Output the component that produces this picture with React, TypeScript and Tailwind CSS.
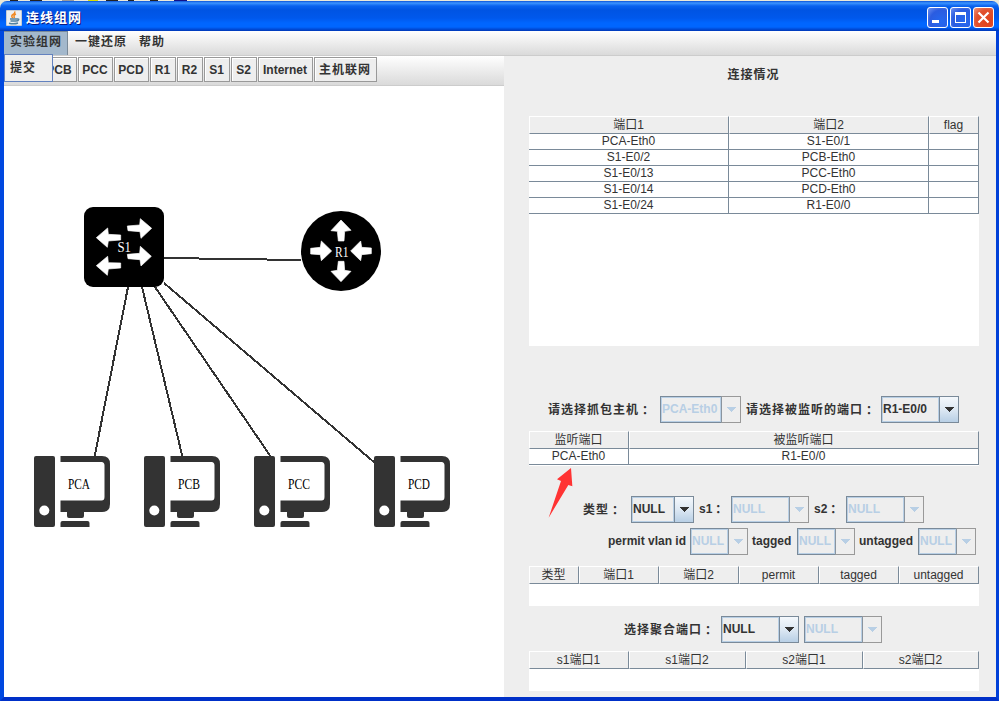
import React from "react";

const cx = (...c: (string | false | undefined)[]) => c.filter(Boolean).join(" ");

type ComboProps = { value: string; width: string; disabled?: boolean; className?: string };

function Combo({ value, width, disabled, className }: ComboProps) {
  return (
    <div className={cx("flex h-[27px] shrink-0", width, className)}>
      <div className="flex min-w-0 flex-1 border border-r-0 border-[#7a8a99]">
        <div
          className={cx(
            "flex flex-1 items-center overflow-hidden whitespace-nowrap border border-[#b8cfe5] pb-[2px] font-bold",
            disabled ? "text-[#b8cfe5]" : "text-[#333]"
          )}
        >
          {value}
        </div>
      </div>
      <div
        className={cx(
          "flex w-5 items-center justify-center border",
          disabled
            ? "border-[#999] border-l-[#8a949e]"
            : "border-[#7a8a99] bg-linear-to-b from-[#f4f8fc] via-[#dde8f3] to-[#b8cfe5]"
        )}
      >
        <svg width="10" height="5" viewBox="0 0 10 5" shapeRendering="crispEdges">
          <path d="M0 0H10L5 5Z" fill={disabled ? "#b8cfe5" : "#333"} />
        </svg>
      </div>
    </div>
  );
}

type TableProps = { cols: string[]; widths: string[]; rows?: string[][]; className: string };

function Table({ cols, widths, rows = [], className }: TableProps) {
  return (
    <div className={cx("ml-[25px] w-[450px] shrink-0 bg-white text-[#333]", className)}>
      <div className="flex h-[18px]">
        {cols.map((c, i) => (
          <div
            key={c}
            className={cx(
              "flex items-center justify-center border border-t-white border-r-[#7a8a99] border-b-[#7a8a99] border-l-white bg-[#eee] pr-px leading-4",
              widths[i]
            )}
          >
            {c}
          </div>
        ))}
      </div>
      {rows.map((r, k) => (
        <div key={k} className="flex h-4">
          {r.map((c, i) => (
            <div
              key={i}
              className={cx("border-r border-b border-[#7a8a99] text-center leading-[14px]", widths[i])}
            >
              {c}
            </div>
          ))}
        </div>
      ))}
    </div>
  );
}

type LabelProps = { text: string; width: string; colon?: boolean; cjk?: boolean };

function Label({ text, width, colon, cjk }: LabelProps) {
  return (
    <span
      className={cx(
        "flex h-4 shrink-0 items-center whitespace-nowrap font-bold",
        cjk ? "tracking-[1px]" : "-mt-[2px]",
        width
      )}
    >
      {text}
      {colon && <span className="font-['Noto_Sans_CJK_TC',sans-serif]">：</span>}
    </span>
  );
}

function Computer({ x, name }: { x: number; name: string }) {
  return (
    <g transform={`translate(${x} 456)`} fill="#333">
      <rect width="21" height="71" rx="2" />
      <circle cx="10.3" cy="54.5" r="5" fill="#fff" />
      <path
        fillRule="evenodd"
        d="M26.5 0H68Q76 0 76 8V48Q76 56 68 56H50V60Q50 62 48 62H35Q33 62 33 60V56H26.5ZM26.5 6V44.5H67.5Q70.5 44.5 70.5 41V9.5Q70.5 6 67.5 6Z"
      />
      <path d="M26.5 71V67Q26.5 65 28.500 65H53.500Q55.500 65 55.500 67V71Z" />
      <text
        x="34"
        y="32.500"
        fontSize="14"
        textLength="22"
        lengthAdjust="spacingAndGlyphs"
        className="fill-black font-['Liberation_Serif',serif]"
      >
        {name}
      </text>
    </g>
  );
}

function Topology() {
  return (
    <svg width="500" height="611" viewBox="4 86 500 611">
      <g stroke="#333" strokeWidth="2" shapeRendering="crispEdges">
        <path d="M164 258L301 260" />
        <path d="M128 287L94.500 457" />
        <path d="M142 287L182.500 457" />
        <path d="M155 287L271 457" />
        <path d="M164 283L375 463" />
      </g>
      <rect x="84" y="207" width="80" height="80" rx="9" />
      <circle cx="341" cy="251" r="40" />
      <g
        transform="translate(70 195) scale(.33333)"
        fill="#fff"
        stroke="#fff"
        strokeWidth="2"
        strokeLinejoin="round"
      >
        <path d="M172 93L209 90L211 71L245 100L213 130L210 110L174 107Z" />
        <path d="M172 178L209 175L211 154L244 184L213 213L210 194L174 191Z" />
        <path d="M79 128L113 99L115 118L152 120V135L115 138L112 157Z" />
        <path d="M79 212L113 184L115 203L152 204V219L115 222L112 241Z" />
        <path d="M813 75L843 106L824 109L822 138H805L802 109L783 107Z" />
        <path d="M813 260L783 229L802 226L805 199H822L824 226L843 229Z" />
        <path d="M785 168L754 197L751 179L722 177V160L751 157L754 138Z" />
        <path d="M842 168L872 138L875 157L904 159V176L875 179L872 197Z" />
      </g>
      <g fontSize="14" fill="#fff" className="font-['Liberation_Serif',serif]">
        <text x="117.500" y="252" textLength="13.500" lengthAdjust="spacingAndGlyphs">S1</text>
        <text x="335" y="257" textLength="13.500" lengthAdjust="spacingAndGlyphs">R1</text>
      </g>
      <Computer x={34} name="PCA" />
      <Computer x={144} name="PCB" />
      <Computer x={254} name="PCC" />
      <Computer x={374} name="PCD" />
    </svg>
  );
}

function TitleBar() {
  const btn = "flex size-[21px] items-center justify-center rounded-[3px] border border-white";
  return (
    <div className="flex h-[30px] shrink-0 items-center rounded-t-[7px] bg-[linear-gradient(#0b52d8_0,#3d95ff_2px,#0a62ee_5px,#0054e3_9px,#0058ec_17px,#0066ff_22px,#0066ff_26px,#004ddb_28px,#0038b8_30px)] pt-[3px] pr-[5px] pl-[6px]">
      <svg width="16" height="16" viewBox="0 0 16 16">
        <rect width="16" height="16" rx="1" fill="#c7cdd3" />
        <rect x="1" y="1" width="14" height="14" fill="#edf0f2" />
        <g fill="none" strokeWidth="1.500">
          <path d="M8.500 1.500Q9.500 3 7 4.500T7 8M10 4Q7 5 8.500 8" stroke="#f08a24" />
          <path d="M4 9H11M4.500 11H10.500M3 13.200Q8 14.500 12 13M11 9Q14 8.500 12 10.500L10.500 11" stroke="#5382a1" />
        </g>
      </svg>
      <span className="ml-1 flex-1 text-[13px] font-bold tracking-[1px] text-white [text-shadow:1px_1px_#0a1883]">
        连线组网
      </span>
      <div className="flex gap-[2px]">
        <div className={cx(btn, "bg-[radial-gradient(circle_at_70%_70%,#2468f0,#2b5ce0_60%,#7192f0)]")}>
          <svg width="19" height="19"><rect x="4" y="12" width="7" height="3" fill="#fff" /></svg>
        </div>
        <div className={cx(btn, "bg-[radial-gradient(circle_at_70%_70%,#2468f0,#2b5ce0_60%,#7192f0)]")}>
          <svg width="19" height="19"><path d="M4 4H15V15H4ZM5 7V14H14V7Z" fill="#fff" fillRule="evenodd" /></svg>
        </div>
        <div className={cx(btn, "bg-[radial-gradient(circle_at_70%_70%,#e0411a,#e0512f_60%,#f0967c)]")}>
          <svg width="19" height="19"><path d="M4.500 4.500L14.500 14.500M14.500 4.500L4.500 14.500" stroke="#fff" strokeWidth="2.200" /></svg>
        </div>
      </div>
    </div>
  );
}

const TOOLS: [string, string][] = [
  ["PCA", "w-[35px]"],
  ["PCB", "w-[35px]"],
  ["PCC", "w-[35px]"],
  ["PCD", "w-[35px]"],
  ["R1", "w-[26px]"],
  ["R2", "w-[26px]"],
  ["S1", "w-[26px]"],
  ["S2", "w-[26px]"],
  ["Internet", "w-[55px]"],
  ["主机联网", "w-[63px] tracking-[1px]"],
];

export default function App() {
  return (
    <div className="relative flex h-[701px] w-[999px] flex-col overflow-hidden bg-[#ece9d8] font-['Liberation_Sans','Noto_Sans_CJK_SC',sans-serif] text-[12px] leading-4 text-[#333]">
      <div className="h-px shrink-0 bg-[linear-gradient(90deg,#ece9d8_10px,#222_10px_18px,#ece9d8_18px_30px,#222_30px_42px,#ece9d8_42px_62px,#999_62px_74px,#ece9d8_74px_88px,#dd0_88px_98px,#ece9d8_98px_106px,#222_106px_118px,#ece9d8_118px_128px,#222_128px_134px,#ece9d8_134px_150px,#222_150px_158px,#ece9d8_158px_174px,#118_174px_187px,#ece9d8_187px)]" />
      <TitleBar />
      <div className="flex min-h-0 flex-1 flex-col border-r-[3px] border-b-4 border-l-4 border-r-[#0040d8] border-b-[#0030c8] border-l-[#0048e0]">
        <nav className="flex h-[25px] shrink-0 border-b border-[#ccc] bg-linear-to-b from-white to-[#dadada] font-bold tracking-[1px]">
          <div className="w-16 border-t border-r border-[#7a8a99] bg-[#a3b8cc] pt-[2px] pl-[6px]">实验组网</div>
          <div className="pt-[3px] pl-[7px]">一键还原</div>
          <div className="pt-[3px] pl-[12px]">帮助</div>
        </nav>
        <div className="flex min-h-0 flex-1">
          <div className="flex w-[500px] shrink-0 flex-col bg-white">
            <div className="flex h-[30px] shrink-0 gap-px border-b border-[#ccc] bg-linear-to-b from-white to-[#dadada] pt-px pl-[2px]">
              {TOOLS.map(([t, w]) => (
                <div
                  key={t}
                  className={cx(
                    "flex h-[25px] shrink-0 items-center justify-center border border-[#999] bg-[#eee] pr-px font-bold whitespace-nowrap shadow-[inset_1px_1px_#fff]",
                    w
                  )}
                >
                  {t}
                </div>
              ))}
            </div>
            <Topology />
          </div>
          <main className="flex min-w-0 flex-1 flex-col bg-[#eee]">
            <h1 className="mt-[11px] mb-[33px] h-4 shrink-0 pl-[7px] text-center font-bold tracking-[1px]">
              连接情况
            </h1>
            <Table
              className="h-[230px]"
              cols={["端口1", "端口2", "flag"]}
              widths={["w-[200px]", "w-[200px]", "w-[50px]"]}
              rows={[
                ["PCA-Eth0", "S1-E0/1", ""],
                ["S1-E0/2", "PCB-Eth0", ""],
                ["S1-E0/13", "PCC-Eth0", ""],
                ["S1-E0/14", "PCD-Eth0", ""],
                ["S1-E0/24", "R1-E0/0", ""],
              ]}
            />
            <div className="mt-[50px] flex items-center pl-11">
              <Label width="w-28" text="请选择抓包主机" colon cjk />
              <Combo value="PCA-Eth0" width="w-[81px]" disabled />
              <span className="w-[5px]" />
              <Label width="w-[135px]" text="请选择被监听的端口" colon cjk />
              <Combo value="R1-E0/0" width="w-[78px]" />
            </div>
            <Table
              className="mt-2 h-[35px]"
              cols={["监听端口", "被监听端口"]}
              widths={["w-[100px]", "w-[350px]"]}
              rows={[["PCA-Eth0", "R1-E0/0"]]}
            />
            <div className="mt-[30px] flex items-center pl-[79px]">
              <Label width="w-12" text="类型" colon cjk />
              <Combo value="NULL" width="w-[63px]" />
              <span className="w-[5px]" />
              <Label width="w-8" text="s1" colon />
              <Combo value="NULL" width="w-[78px]" disabled />
              <span className="w-[5px]" />
              <Label width="w-8" text="s2" colon />
              <Combo value="NULL" width="w-[78px]" disabled />
            </div>
            <div className="mt-[5px] flex items-center pl-[104px]">
              <Label width="w-[82px]" text="permit vlan id" />
              <Combo value="NULL" width="w-[58px]" disabled />
              <span className="w-1" />
              <Label width="w-[45px]" text="tagged" />
              <Combo value="NULL" width="w-[58px]" disabled />
              <span className="w-1" />
              <Label width="w-[59px]" text="untagged" />
              <Combo value="NULL" width="w-[58px]" disabled />
            </div>
            <Table
              className="mt-[11px] h-10"
              cols={["类型", "端口1", "端口2", "permit", "tagged", "untagged"]}
              widths={["w-[50px]", "w-20", "w-20", "w-20", "w-20", "w-20"]}
            />
            <div className="mt-[10px] flex items-center pl-[120px]">
              <Label width="w-[97px]" text="选择聚合端口" colon cjk />
              <Combo value="NULL" width="w-[78px]" />
              <Combo value="NULL" width="w-[78px]" disabled className="ml-[5px]" />
            </div>
            <Table
              className="mt-2 h-10"
              cols={["s1端口1", "s1端口2", "s2端口1", "s2端口2"]}
              widths={["w-[100px]", "w-[117px]", "w-[117px]", "w-[116px]"]}
            />
          </main>
        </div>
      </div>
      <div className="absolute top-[54px] left-1 h-7 w-[49px] border border-[#6382bf] bg-[#eee] pt-[5px] pl-[5px] font-bold tracking-[1px]">
        提交
      </div>
      <svg className="absolute top-[466px] left-[546px]" width="30" height="54" viewBox="108 228 90 162">
        <path d="M183 234L187 289L175 285L116 383L153 273L141 268Z" fill="#f33" />
      </svg>
    </div>
  );
}
